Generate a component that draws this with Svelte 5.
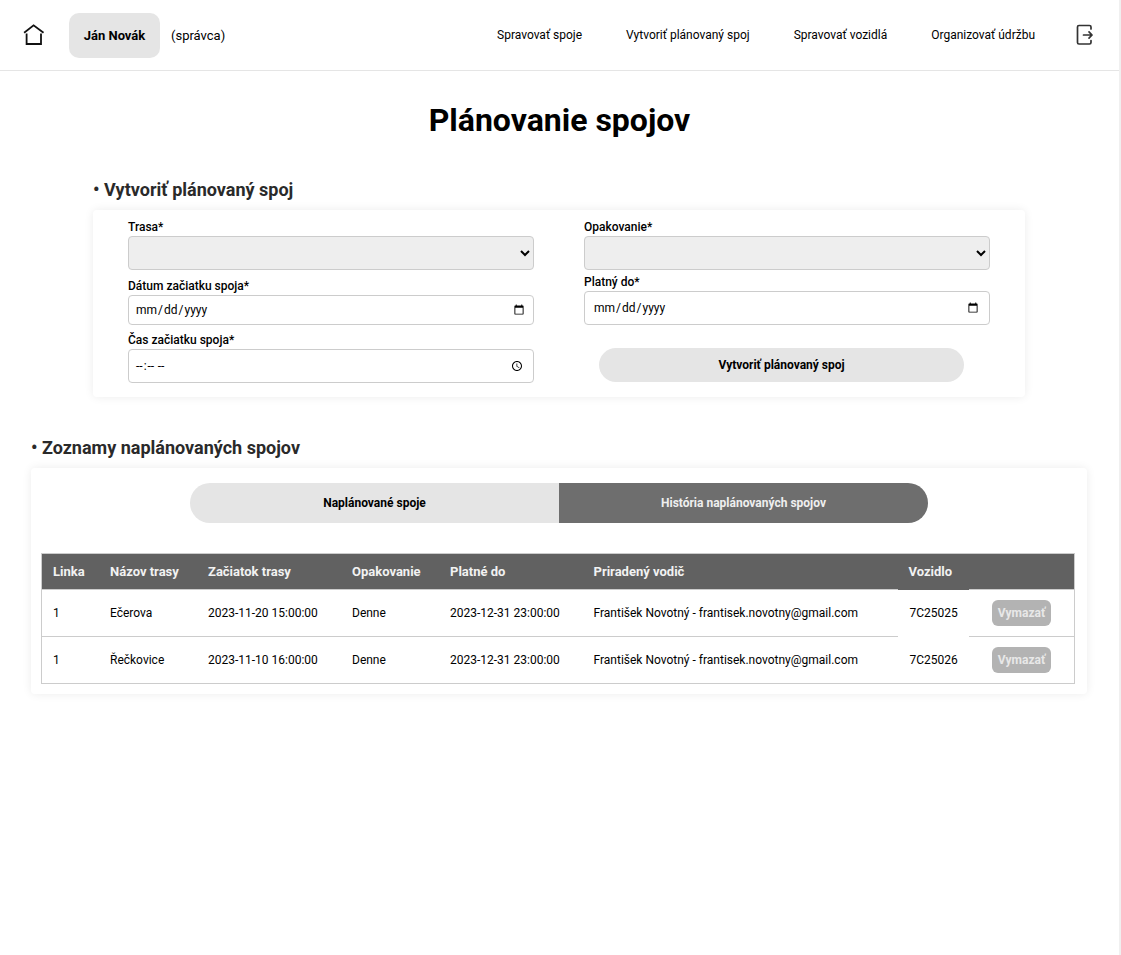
<script>
  const nav = ['Spravovať spoje', 'Vytvoriť plánovaný spoj', 'Spravovať vozidlá', 'Organizovať údržbu'];
  const rows = [
    { line: '1', route: 'Ečerova', start: '2023-11-20 15:00:00', vehicle: '7C25025' },
    { line: '1', route: 'Řečkovice', start: '2023-11-10 16:00:00', vehicle: '7C25026' }
  ];
</script>

<div class="page">
  <header class="top">
    <div class="left">
      <svg class="home" width="24" height="24" viewBox="0 0 24 24" fill="none" stroke="#111" stroke-width="1.8" stroke-linecap="square">
        <path d="M2.8 9.2 L11.6 2.4 L20.8 9.2" />
        <path d="M4.6 11.5 V21 H19 V11.5" />
      </svg>
      <div class="user">Ján Novák</div>
      <span class="role">(správca)</span>
    </div>
    <nav class="right">
      {#each nav as item}
        <span class="link">{item}</span>
      {/each}
      <svg class="logout" width="20" height="24" viewBox="0 0 20 24" fill="none" stroke="#333" stroke-width="1.7" stroke-linecap="round" stroke-linejoin="round">
        <path d="M16 6 V4 Q16 2.5 14.5 2.5 H4 Q2.5 2.5 2.5 4 V19.5 Q2.5 21 4 21 H14.5 Q16 21 16 19.5 V17.5" />
        <path d="M8.5 12 H17 M14 8.8 L17 12 L14 15.2" />
      </svg>
    </nav>
  </header>

  <h1>Plánovanie spojov</h1>

  <section class="create">
    <h2>• Vytvoriť plánovaný spoj</h2>
    <div class="card form">
      <div class="col">
        <label for="trasa">Trasa*</label>
        <select id="trasa"></select>
        <label for="datum">Dátum začiatku spoja*</label>
        <input id="datum" class="date" type="date" />
        <label for="cas">Čas začiatku spoja*</label>
        <input id="cas" class="time" type="time" />
      </div>
      <div class="col">
        <label for="opak">Opakovanie*</label>
        <select id="opak"></select>
        <label for="platny">Platný do*</label>
        <input id="platny" class="date" type="date" />
        <button class="submit">Vytvoriť plánovaný spoj</button>
      </div>
    </div>
  </section>

  <section class="lists">
    <h2>• Zoznamy naplánovaných spojov</h2>
    <div class="card listcard">
      <div class="tabs">
        <button class="tab">Naplánované spoje</button>
        <button class="tab active">História naplánovaných spojov</button>
      </div>
      <table>
        <thead>
          <tr>
            <th class="c1">Linka</th>
            <th class="c2">Názov trasy</th>
            <th class="c3">Začiatok trasy</th>
            <th class="c4">Opakovanie</th>
            <th class="c5">Platné do</th>
            <th class="c6">Priradený vodič</th>
            <th class="c7 veh">Vozidlo</th>
            <th class="c8"></th>
          </tr>
        </thead>
        <tbody>
          {#each rows as r}
            <tr>
              <td>{r.line}</td>
              <td>{r.route}</td>
              <td>{r.start}</td>
              <td>Denne</td>
              <td>2023-12-31 23:00:00</td>
              <td>František Novotný - frantisek.novotny@gmail.com</td>
              <td class="veh">{r.vehicle}</td>
              <td class="act"><button class="del">Vymazať</button></td>
            </tr>
          {/each}
        </tbody>
      </table>
    </div>
  </section>
</div>

<style>
  :global(body) {
    margin: 0;
    background: #fff;
    font-family: Roboto, sans-serif;
    color: #000;
  }
  .page {
    box-sizing: border-box;
    width: 1121px;
    height: 955px;
    border-right: 2px solid #f0f0f0;
    overflow: hidden;
  }
  .top {
    box-sizing: border-box;
    height: 71px;
    border-bottom: 1px solid #e5e5e5;
    display: flex;
    align-items: center;
    justify-content: space-between;
    padding: 0 24px 0 22px;
  }
  .left, .right {
    display: flex;
    align-items: center;
  }
  .home { margin-right: 23px; }
  .user {
    width: 91px;
    height: 45px;
    display: flex;
    align-items: center;
    justify-content: center;
    background: #e5e5e5;
    border-radius: 10px;
    font-size: 13px;
    font-weight: 700;
  }
  .role {
    margin-left: 11px;
    font-size: 13px;
  }
  .link {
    font-size: 12px;
    margin-right: 44px;
  }
  .link:nth-child(4) { margin-right: 40px; }
  h1 {
    margin: 30px 0 0;
    text-align: center;
    font-size: 32px;
    line-height: 38px;
    font-weight: 700;
  }
  h2 {
    margin: 0;
    font-size: 18px;
    line-height: 22px;
    font-weight: 700;
    color: #2a2a2a;
  }
  .create {
    margin: 40px 94px 0 93px;
  }
  .card {
    background: #fff;
    border-radius: 4px;
    box-shadow: 0 0 10px rgba(0, 0, 0, 0.08);
  }
  .form {
    margin-top: 9px;
    height: 187px;
    box-sizing: border-box;
    padding: 9px 35px 0;
    display: flex;
    gap: 50px;
  }
  .col {
    width: 406px;
    display: flex;
    flex-direction: column;
  }
  label {
    font-size: 12px;
    font-weight: 500;
    line-height: 16px;
    margin-bottom: 1px;
  }
  select, input {
    box-sizing: border-box;
    width: 100%;
    border: 1px solid #ccc;
    border-radius: 4px;
    font-family: Roboto, sans-serif;
    font-size: 12px;
    margin: 0;
  }
  select {
    height: 34px;
    background: #eee;
    margin-bottom: 8px;
  }
  input {
    background: #fff;
    padding: 0 6px;
    color: #000;
  }
  input.date { height: 30px; margin-bottom: 7px; }
  input.time { height: 34px; padding-right: 6px; }
  .col:last-child select { margin-bottom: 4px; }
  .col:last-child input.date { height: 34px; padding: 0 8px; }
  .submit {
    margin: 16px 26px 0 15px;
    height: 34px;
    width: 365px;
    border: none;
    border-radius: 17px;
    background: #e5e5e5;
    font-family: Roboto, sans-serif;
    font-size: 12px;
    font-weight: 700;
    color: #000;
  }
  .lists {
    margin: 40px 32px 0 31px;
  }
  .listcard {
    margin-top: 9px;
    height: 226px;
    box-sizing: border-box;
    padding: 15px 12px 0 10px;
  }
  .tabs {
    display: flex;
    justify-content: center;
    margin: 0 0 30px 2px;
  }
  .tab {
    width: 369px;
    height: 40px;
    border: none;
    background: #e5e5e5;
    font-family: Roboto, sans-serif;
    font-size: 12px;
    font-weight: 700;
    color: #000;
    border-radius: 20px 0 0 20px;
  }
  .tab.active {
    background: #6e6e6e;
    color: #eee;
    border-radius: 0 20px 20px 0;
  }
  table {
    width: 1034px;
    border-collapse: collapse;
    table-layout: fixed;
    border: 1px solid #ccc;
    font-size: 12px;
  }
  th {
    box-sizing: border-box;
    height: 36px;
    padding: 0 11px;
    background: #616161;
    color: #f2f2f2;
    text-align: left;
    font-size: 13px;
    font-weight: 700;
    border: 1px solid #ccc;
    border-width: 1px 0;
  }
  th.veh { border-bottom-color: #616161; }
  td {
    height: 46px;
    padding: 0 11px;
    border-bottom: 1px solid #ccc;
  }
  th:nth-child(n+2):nth-child(-n+5),
  td:nth-child(n+2):nth-child(-n+5) { padding-left: 11.5px; }
  td.veh { padding-left: 12px; }
  tbody tr:first-child td.veh { border-bottom-color: #fff; }
  .c1 { width: 57px; }
  .c2 { width: 98px; }
  .c3 { width: 144px; }
  .c4 { width: 98px; }
  .c5 { width: 144px; }
  .c6 { width: 315px; }
  .c7 { width: 71px; }
  .act { padding: 0 0 0 23px; }
  .del {
    width: 59px;
    height: 26px;
    padding: 0 0 0 1px;
    border: none;
    border-radius: 6px;
    background: #b3b3b3;
    color: #e8e8e8;
    font-family: Roboto, sans-serif;
    font-size: 12px;
    font-weight: 700;
    display: block;
  }
  svg { display: block; flex: none; }
</style>
